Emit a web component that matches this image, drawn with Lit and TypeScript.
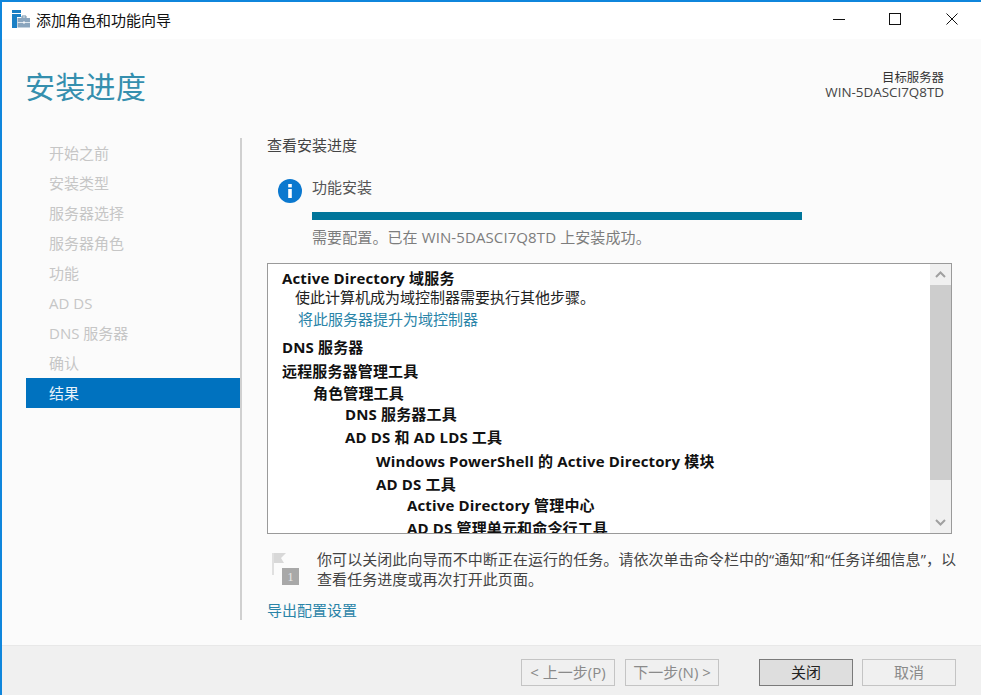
import { LitElement, html, css } from "lit";
import { customElement } from "lit/decorators.js";

const NAV = ["开始之前", "安装类型", "服务器选择", "服务器角色", "功能", "AD DS", "DNS 服务器", "确认", "结果"];
const ROWS: { t: string; x: number; h: number; cls: string }[] = [
  { t: "Active Directory 域服务", x: 14, h: 19, cls: "b" },
  { t: "使此计算机成为域控制器需要执行其他步骤。", x: 27, h: 22, cls: "n" },
  { t: "将此服务器提升为域控制器", x: 30, h: 28, cls: "l" },
  { t: "DNS 服务器", x: 14, h: 24, cls: "b" },
  { t: "远程服务器管理工具", x: 14, h: 22, cls: "b" },
  { t: "角色管理工具", x: 45, h: 21, cls: "b" },
  { t: "DNS 服务器工具", x: 77, h: 23, cls: "b" },
  { t: "AD DS 和 AD LDS 工具", x: 77, h: 24, cls: "b" },
  { t: "Windows PowerShell 的 Active Directory 模块", x: 108, h: 23, cls: "b" },
  { t: "AD DS 工具", x: 108, h: 21, cls: "b" },
  { t: "Active Directory 管理中心", x: 139, h: 23, cls: "b" },
  { t: "AD DS 管理单元和命令行工具", x: 139, h: 22, cls: "b" },
];

@customElement("app-root")
export class AppRoot extends LitElement {
  static styles = css`
    :host {
      display: block;
      width: 981px;
      height: 695px;
      overflow: hidden;
      font-family: "Open Sans", "Noto Sans CJK SC", sans-serif;
      font-size: 15px;
      color: #333;
      background: #fbfbfb;
    }
    * { box-sizing: border-box; }
    .win {
      height: 695px;
      display: flex;
      flex-direction: column;
      border-top: 2px solid #0f86dc;
      border-left: 2px solid #0f86dc;
    }
    .title {
      height: 37px;
      flex: none;
      background: #fff;
      display: flex;
      align-items: center;
      padding: 0 0 3px 10px;
      color: #111;
    }
    .title .name { margin-left: 6px; font-size: 15px; }
    .ctrls { margin-left: auto; display: flex; padding-right: 1px; }
    .ctrl { width: 56px; display: flex; align-items: center; justify-content: center; }
    .ctrl.sm { width: 57px; padding-left: 1px; }
    .head {
      flex: none;
      height: 99px;
      display: flex;
      justify-content: space-between;
      padding: 27px 37px 0 24px;
    }
    h1 {
      margin: 0 0 0 -1px;
      font-size: 30px;
      font-weight: 400;
      line-height: 42px;
      letter-spacing: 0.3px;
      color: #358fae;
    }
    .server { text-align: right; line-height: 15px; padding-top: 4px; color: #444; font-size: 13.4px; }
    .server .cap { font-size: 12.4px; color: #333; }
    .main { flex: 1; display: flex; min-height: 0; }
    .nav { width: 238px; flex: none; padding: 0 0 0 24px; }
    .nav div {
      height: 30px;
      line-height: 30px;
      padding-left: 23px;
      font-size: 15px;
      color: #c6c6c6;
    }
    .nav div.on { background: #0072bf; color: #e8f2fa; }
    .content {
      width: 725px;
      height: 482px;
      flex: none;
      border-left: 2px solid #d0d0d0;
      padding-left: 25px;
      display: flex;
      flex-direction: column;
    }
    .content > * { flex: none; }
    .sub { line-height: 14px; height: 14px; color: #444; }
    .status { display: flex; margin-top: 26px; padding-left: 11px; height: 85px; }
    .info { width: 24px; height: 24px; margin-top: 1px; flex: none; }
    .stext { margin-left: 10px; width: 490px; }
    .stext .s1 { line-height: 20px; margin-top: -1px; color: #555; }
    .bar { height: 8px; background: #00759a; margin-top: 15px; }
    .stext .s2 { line-height: 20px; margin-top: 7px; color: #7d7d7d; white-space: nowrap; letter-spacing: 0.1px; }
    .box {
      width: 685px;
      height: 271px;
      border: 1px solid #9a9a9a;
      background: #fff;
      display: flex;
      overflow: hidden;
    }
    .list { flex: 1; overflow: hidden; padding-top: 4px; }
    .row { white-space: nowrap; line-height: 20px; color: #222; }
    .row.b { font-weight: 700; color: #111; letter-spacing: 0.15px; }
    .row.l { color: #2a84a8; }
    .sb { width: 21px; flex: none; background: #f0f0f0; display: flex; flex-direction: column; }
    .sb .arrow { height: 21px; flex: none; display: flex; align-items: center; justify-content: center; }
    .sb .thumb { height: 195px; flex: none; background: #cdcdcd; }
    .sb .rest { flex: 1; }
    .note { display: flex; margin-top: 15px; }
    .flag { width: 32px; height: 36px; flex: none; margin: 4px 0 0 5px; }
    .ntext { margin-left: 13px; line-height: 20px; color: #444; width: 643px; flex: none; letter-spacing: 0.07px; }
    .export { margin-top: 11px; line-height: 20px; color: #2a84a8; }
    .foot {
      flex: none;
      height: 50px;
      background: #f0f0f0;
      border-top: 1px solid #e8e8e8;
      display: flex;
      align-items: flex-start;
      padding: 13px 0 0 519px;
    }
    .btn {
      width: 94px;
      height: 27px;
      line-height: 25px;
      text-align: center;
      border: 1px solid #c4c4c4;
      color: #8a8a8a;
      white-space: nowrap;
    }
    .btn.second { margin-left: 10px; }
    .btn.gap { margin-left: 40px; }
    .btn.last { margin-left: 9px; }
    .btn.def { border: 1px solid #7a7a7a; background: #dedede; color: #222; }
    svg { display: block; }
    .digit { font-family: "Liberation Serif", serif; font-size: 12px; fill: #e8e8e8; }
  `;

  render() {
    return html`<div class="win">
      <div class="title">
        <svg width="18" height="18" viewBox="0 0 18 18">
          <rect x="0" y="0" width="9" height="3" fill="#1a7fc4"/>
          <rect x="0" y="4" width="5" height="14" fill="#1a7fc4"/>
          <rect x="5" y="4" width="4" height="3" fill="#1a7fc4"/>
          <path d="M10 6h4v2h-4z" fill="none" stroke="#6f8ea8" stroke-width="1"/>
          <rect x="5.500" y="8" width="12.500" height="9.500" fill="#8aa5bd"/>
          <rect x="5.500" y="12" width="12.500" height="1" fill="#dfe7ee"/>
          <rect x="11" y="11.500" width="2" height="2" fill="#f3f6f8"/>
        </svg>
        <span class="name">添加角色和功能向导</span>
        <div class="ctrls">
          <div class="ctrl"><svg width="12" height="12"><path d="M0 6.500h12" stroke="#111"/></svg></div>
          <div class="ctrl"><svg width="12" height="12"><rect x=".5" y=".5" width="11" height="11" fill="none" stroke="#111"/></svg></div>
          <div class="ctrl sm"><svg width="12" height="12"><path d="M.5.5l11 11M11.500.5l-11 11" stroke="#111"/></svg></div>
        </div>
      </div>
      <div class="head">
        <h1>安装进度</h1>
        <div class="server"><div class="cap">目标服务器</div><div>WIN-5DASCI7Q8TD</div></div>
      </div>
      <div class="main">
        <div class="nav">
          ${NAV.map((n, i) => html`<div class=${i === NAV.length - 1 ? "on" : ""}>${n}</div>`)}
        </div>
        <div class="content">
          <div class="sub">查看安装进度</div>
          <div class="status">
            <svg class="info" viewBox="0 0 24 24">
              <circle cx="12" cy="12" r="12" fill="#0a78cf"/>
              <rect x="10.200" y="5" width="3.600" height="3.400" fill="#fff"/>
              <rect x="10.200" y="10" width="3.600" height="9" fill="#fff"/>
            </svg>
            <div class="stext">
              <div class="s1">功能安装</div>
              <div class="bar"></div>
              <div class="s2">需要配置。已在 WIN-5DASCI7Q8TD 上安装成功。</div>
            </div>
          </div>
          <div class="box">
            <div class="list">
              ${ROWS.map(r => html`<div class="row ${r.cls}" style="padding-left:${r.x}px;height:${r.h}px">${r.t}</div>`)}
            </div>
            <div class="sb">
              <div class="arrow"><svg width="11" height="7"><path d="M1 6l4.500-4.500L10 6" fill="none" stroke="#a0a0a0" stroke-width="2"/></svg></div>
              <div class="thumb"></div>
              <div class="rest"></div>
              <div class="arrow"><svg width="11" height="7"><path d="M1 1l4.500 4.500L10 1" fill="none" stroke="#a0a0a0" stroke-width="2"/></svg></div>
            </div>
          </div>
          <div class="note">
            <svg class="flag" viewBox="0 0 32 36">
              <rect x="0" y="0" width="2" height="22" fill="#e0e0e0"/>
              <path d="M2 0h12l-5 5 3 5H2z" fill="#d8d8d8"/>
              <rect x="10" y="15" width="17" height="17" fill="#a8a8a8"/>
              <text class="digit" x="18.500" y="28" text-anchor="middle">1</text>
            </svg>
            <div class="ntext">你可以关闭此向导而不中断正在运行的任务。请依次单击命令栏中的“通知”和“任务详细信息”，以查看任务进度或再次打开此页面。</div>
          </div>
          <div class="export">导出配置设置</div>
        </div>
      </div>
      <div class="foot">
        <div class="btn">&lt; 上一步(P)</div>
        <div class="btn second">下一步(N) &gt;</div>
        <div class="btn gap def">关闭</div>
        <div class="btn last">取消</div>
      </div>
    </div>`;
  }
}
